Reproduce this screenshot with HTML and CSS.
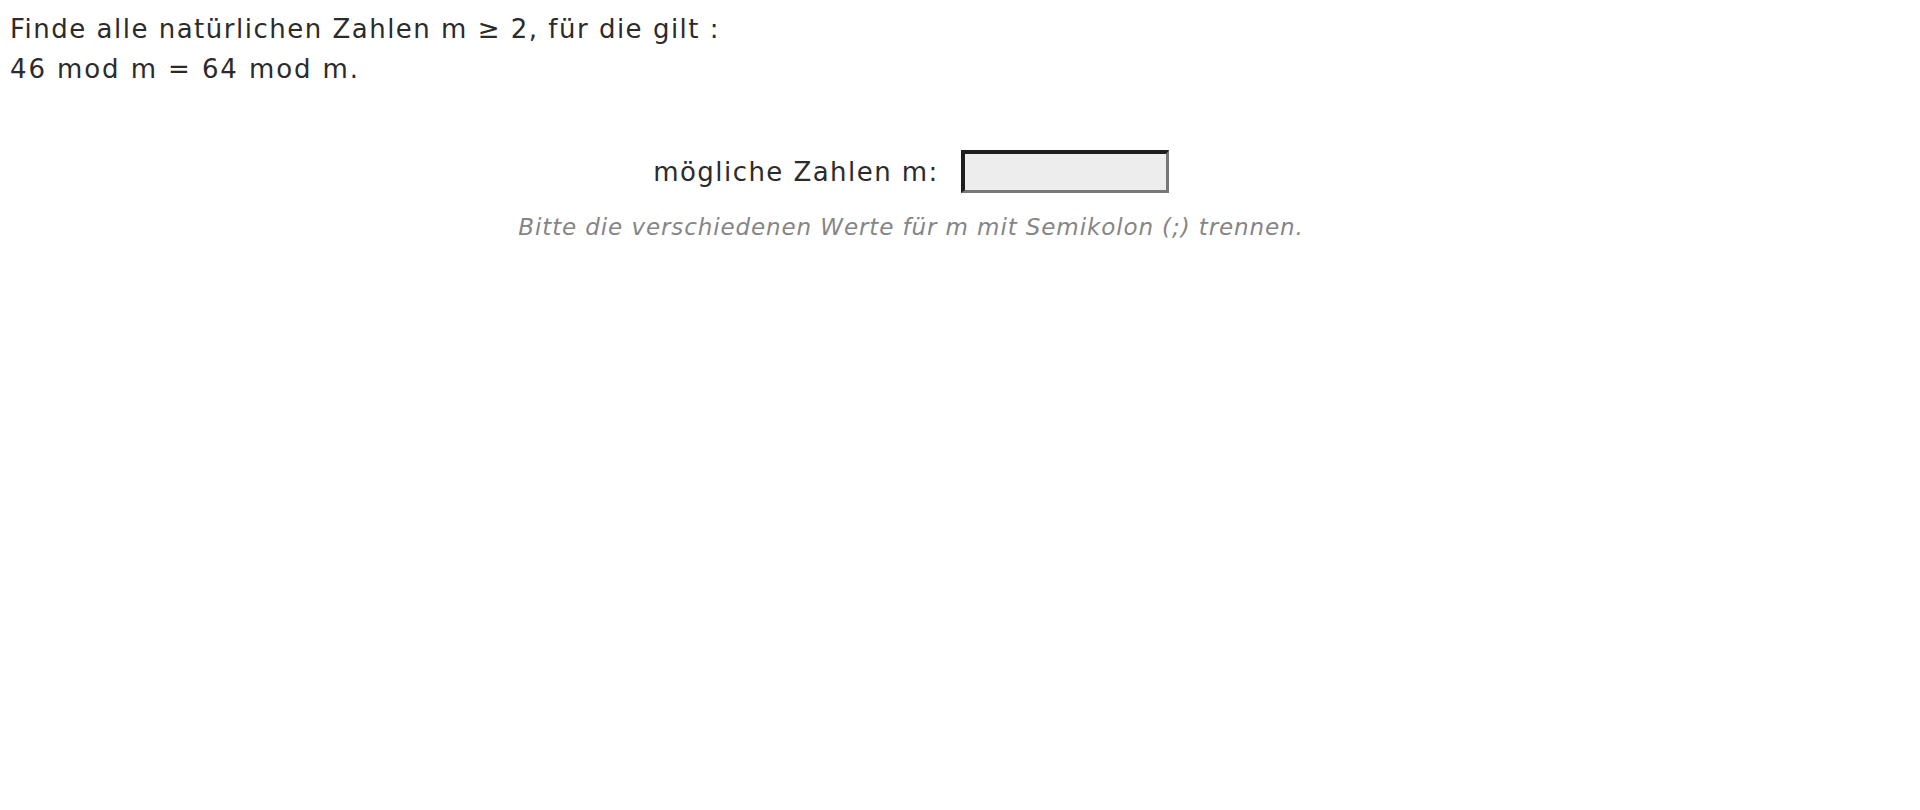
FILE: index.html
```html
<!DOCTYPE html>
<html lang="de">
<head>
<meta charset="utf-8">
<title>Aufgabe</title>
<link rel="stylesheet" href="styles.css">
</head>
<body>
<div class="task">
  <p class="question">Finde alle natürlichen Zahlen m ≥ 2, für die gilt :<br><span class="formula">46 mod m = 64 mod m.</span></p>
  <div class="answer">
    <div class="row">
      <label class="label" for="m">mögliche Zahlen m:</label>
      <input class="field" id="m" type="text">
    </div>
    <p class="hint">Bitte die verschiedenen Werte für m mit Semikolon (;) trennen.</p>
  </div>
</div>
</body>
</html>
```
FILE: styles.css
```css
html, body {
  margin: 0;
  padding: 0;
  background: #fff;
}
body {
  font-family: "DejaVu Sans", Verdana, sans-serif;
  color: #2b2b2b;
}
.task {
  padding: 9px 108px 0 10px;
}
.question {
  margin: 0;
  font-size: 26px;
  line-height: 40px;
  letter-spacing: 1.5px;
}
.formula {
  letter-spacing: 1.9px;
}
.answer {
  display: flex;
  flex-direction: column;
  align-items: center;
  margin-top: 61px;
}
.row {
  display: flex;
  align-items: center;
  gap: 22px;
}
.label {
  font-size: 26px;
  letter-spacing: 1.45px;
}
.field {
  box-sizing: border-box;
  width: 208px;
  height: 43px;
  margin: 0;
  background: #ededed;
  border-style: solid;
  border-width: 4px 3px 3px 4px;
  border-color: #1e1e1e #777 #777 #1e1e1e;
}
.hint {
  margin: 21px 0 0;
  font-size: 23px;
  font-style: italic;
  letter-spacing: 0.9px;
  color: #858585;
}
```
